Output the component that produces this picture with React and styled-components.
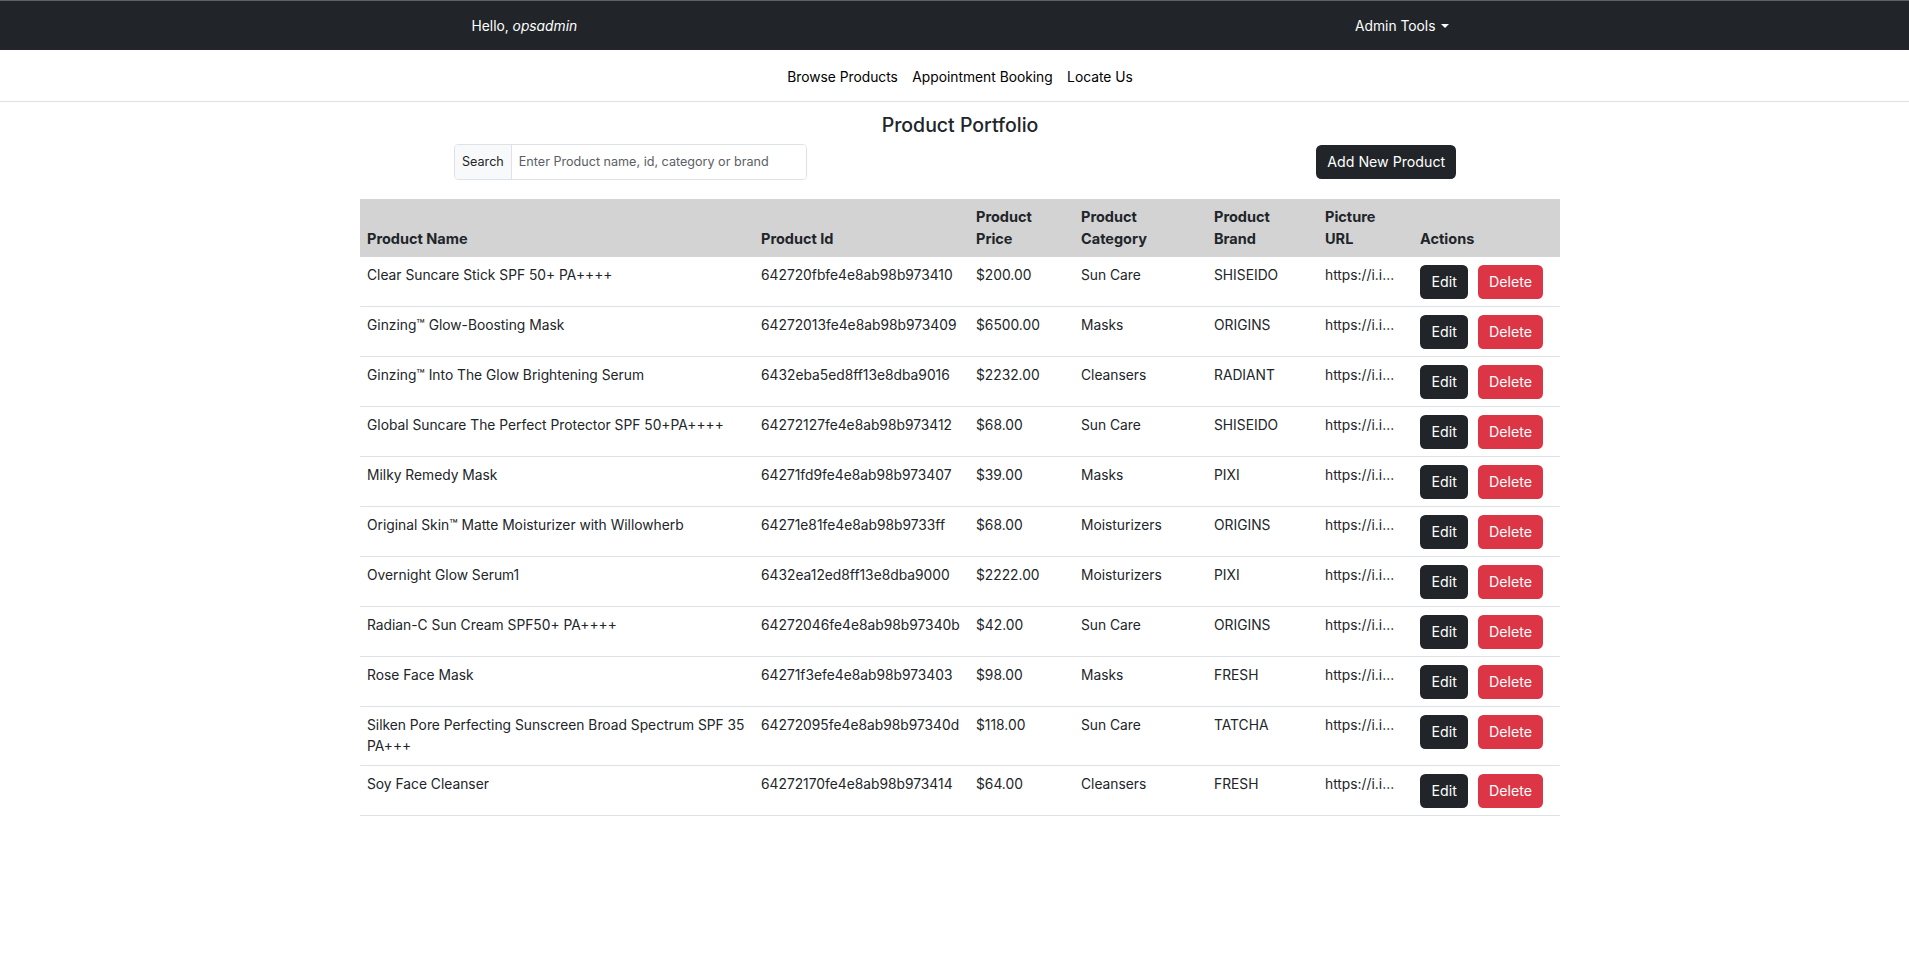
import React from "react";
import styled, { createGlobalStyle } from "styled-components";

const GlobalStyle = createGlobalStyle`
    body {
        margin : 0;
        font-family : Inter, "Liberation Sans", Arial, sans-serif;
        font-size : 13.8px;
        color : #212529;
        background : #fff;
    }
`;

const Page = styled.div`
    padding-left : 11px;
`;

const TopBar = styled.header`
    height : 49px;
    margin-left : -11px;
    padding-left : 11px;
    background : #212529;
    border-top : 1px solid #5c6166;
    display : flex;
    align-items : center;
    justify-content : center;
`;

const TopInner = styled.div`
    width : 977px;
    display : flex;
    justify-content : space-between;
    align-items : center;
    color : #fff;
`;

const Greeting = styled.span`
    em { font-style : italic; }
`;

const Dropdown = styled.span`
    display : inline-flex;
    align-items : center;
    gap : 5px;
    cursor : pointer;

    &::after {
        content : "";
        border-top : 4.5px solid #fff;
        border-left : 4px solid transparent;
        border-right : 4px solid transparent;
    }
`;

const SubNav = styled.nav`
    height : 52px;
    margin-left : -11px;
    padding : 2px 0 0 11px;
    box-sizing : border-box;
    border-bottom : 1px solid #dee2e6;
    display : flex;
    align-items : center;
    justify-content : center;
`;

const NavLink = styled.a`
    padding : 0 7.2px;
    color : #000;
    text-decoration : none;
    cursor : pointer;
`;

const Main = styled.main`
    padding-top : 9.5px;
`;

const Title = styled.h4`
    margin : 0;
    text-align : center;
    font-size : 19.5px;
    font-weight : 500;
    line-height : 26px;
`;

const Toolbar = styled.div`
    width : 1002px;
    margin : 6px auto 0;
    padding-right : 10px;
    display : flex;
    justify-content : space-between;
    align-items : center;
`;

const InputGroup = styled.div`
    display : flex;
    width : 353px;
    height : 36px;
    border : 1px solid #dee2e6;
    border-radius : 4px;
    box-sizing : border-box;
    overflow : hidden;
`;

const Addon = styled.span`
    display : flex;
    align-items : center;
    padding : 0 7px;
    background : #f8f9fa;
    border-right : 1px solid #dee2e6;
    font-size : 12.6px;
`;

const SearchInput = styled.input`
    flex : 1;
    border : none;
    outline : none;
    padding : 0 7px;
    font-family : inherit;
    font-size : 12.6px;
    color : #212529;

    &::placeholder {
        color : #5c6066;
    }
`;

const Button = styled.button`
    height : 34px;
    padding : 0 ${props => props.$wide ? 11.5 : 10.8}px;
    border : none;
    border-radius : 5.4px;
    font-family : inherit;
    font-size : 14.2px;
    color : #fff;
    background : ${props => props.$variant === "danger" ? "#dc3545" : "#212529"};
    cursor : pointer;
`;

const Table = styled.table`
    width : 1200px;
    margin : 19px auto 0;
    border-collapse : collapse;
    table-layout : fixed;
`;

const Th = styled.th`
    width : ${props => props.$w}px;
    box-sizing : border-box;
    background : #d3d3d3;
    text-align : left;
    vertical-align : bottom;
    font-size : 14.5px;
    font-weight : 700;
    line-height : 21.6px;
    padding : 7.5px 7px;
`;

const Td = styled.td`
    vertical-align : top;
    line-height : 21.6px;
    padding : 8px 7px 7px;
    border-bottom : 1px solid #dee2e6;
`;

const Url = styled.div`
    white-space : nowrap;
    overflow : hidden;
    text-overflow : ellipsis;
`;

const Actions = styled.div`
    display : flex;
    gap : 10px;
`;

const columns = [
    ["Product Name", 394],
    ["Product Id", 215],
    ["Product Price", 105],
    ["Product Category", 133],
    ["Product Brand", 111],
    ["Picture URL", 95],
    ["Actions", 147],
];

const products = [
    ["Clear Suncare Stick SPF 50+ PA++++", "642720fbfe4e8ab98b973410", "$200.00", "Sun Care", "SHISEIDO"],
    ["Ginzing™ Glow-Boosting Mask", "64272013fe4e8ab98b973409", "$6500.00", "Masks", "ORIGINS"],
    ["Ginzing™ Into The Glow Brightening Serum", "6432eba5ed8ff13e8dba9016", "$2232.00", "Cleansers", "RADIANT"],
    ["Global Suncare The Perfect Protector SPF 50+PA++++", "64272127fe4e8ab98b973412", "$68.00", "Sun Care", "SHISEIDO"],
    ["Milky Remedy Mask", "64271fd9fe4e8ab98b973407", "$39.00", "Masks", "PIXI"],
    ["Original Skin™ Matte Moisturizer with Willowherb", "64271e81fe4e8ab98b9733ff", "$68.00", "Moisturizers", "ORIGINS"],
    ["Overnight Glow Serum1", "6432ea12ed8ff13e8dba9000", "$2222.00", "Moisturizers", "PIXI"],
    ["Radian-C Sun Cream SPF50+ PA++++", "64272046fe4e8ab98b97340b", "$42.00", "Sun Care", "ORIGINS"],
    ["Rose Face Mask", "64271f3efe4e8ab98b973403", "$98.00", "Masks", "FRESH"],
    ["Silken Pore Perfecting Sunscreen Broad Spectrum SPF 35 PA+++", "64272095fe4e8ab98b97340d", "$118.00", "Sun Care", "TATCHA"],
    ["Soy Face Cleanser", "64272170fe4e8ab98b973414", "$64.00", "Cleansers", "FRESH"],
];

const App = () => {
    return(
        <Page>
            <GlobalStyle />
            <TopBar>
                <TopInner>
                    <Greeting>Hello, <em>opsadmin</em></Greeting>
                    <Dropdown>Admin Tools</Dropdown>
                </TopInner>
            </TopBar>
            <SubNav>
                <NavLink>Browse Products</NavLink>
                <NavLink>Appointment Booking</NavLink>
                <NavLink>Locate Us</NavLink>
            </SubNav>
            <Main>
                <Title>Product Portfolio</Title>
                <Toolbar>
                    <InputGroup>
                        <Addon>Search</Addon>
                        <SearchInput placeholder="Enter Product name, id, category or brand" />
                    </InputGroup>
                    <Button>Add New Product</Button>
                </Toolbar>
                <Table>
                    <thead>
                        <tr>
                            {columns.map(([label, w]) => (
                                <Th key={label} $w={w}>{label}</Th>
                            ))}
                        </tr>
                    </thead>
                    <tbody>
                        {products.map(([name, id, price, category, brand]) => (
                            <tr key={id}>
                                <Td>{name}</Td>
                                <Td>{id}</Td>
                                <Td>{price}</Td>
                                <Td>{category}</Td>
                                <Td>{brand}</Td>
                                <Td><Url>https://i.imgur.com/{id.slice(-6)}.jpg</Url></Td>
                                <Td>
                                    <Actions>
                                        <Button $wide>Edit</Button>
                                        <Button $variant="danger">Delete</Button>
                                    </Actions>
                                </Td>
                            </tr>
                        ))}
                    </tbody>
                </Table>
            </Main>
        </Page>
    );
};

export default App;
